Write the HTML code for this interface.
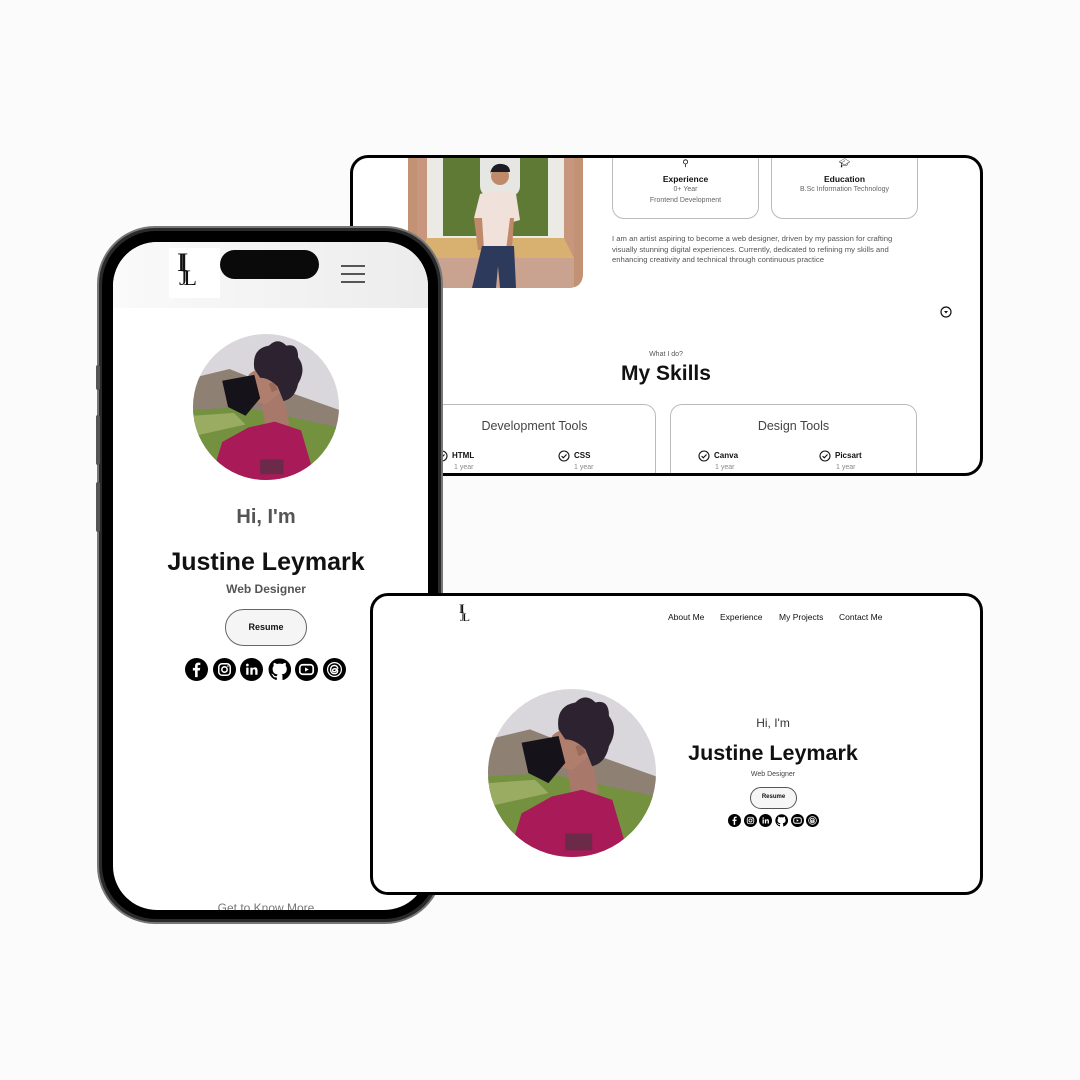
<!DOCTYPE html>
<html><head><meta charset="utf-8">
<style>
*{margin:0;padding:0;box-sizing:border-box}
body{width:1080px;height:1080px;background:#fbfbfb;position:relative;overflow:hidden;font-family:"Liberation Sans",sans-serif;color:#111}
.abs{position:absolute}
.card{position:absolute;background:#fff;border:3px solid #000;border-radius:18px;overflow:hidden}
.t{position:absolute;white-space:nowrap}
.c{text-align:center}
</style></head><body>
<svg width="0" height="0" style="position:absolute">
<defs>
<clipPath id="cc2"><circle cx="50" cy="50" r="50"/></clipPath>
<symbol id="pf" viewBox="0 0 100 100">
<g clip-path="url(#cc2)">
<rect width="100" height="100" fill="#d9d7db"/>
<path d="M0 30 L25 24 L55 36 L100 52 L100 72 L0 72Z" fill="#8f8074"/>
<path d="M0 52 L35 50 L100 64 L100 100 L0 100Z" fill="#74913f"/>
<path d="M0 56 L28 54 L36 62 L0 70Z" fill="#9aab62"/>
<path d="M46 40 L62 42 L66 62 L50 66Z" fill="#a8796a"/>
<path d="M38 28 Q44 22 54 24 L60 40 L50 48 L40 46Z" fill="#b07e6c"/>
<path d="M12 100 L20 74 L38 64 L56 60 L74 66 L84 100Z" fill="#a81a58"/>
<path d="M42 24 Q40 10 52 8 Q58 2 64 8 Q72 6 72 16 Q78 24 72 34 Q70 44 62 46 L58 36 Q52 30 46 30Z" fill="#2c2230"/>
<path d="M20 32 L42 28 L46 44 L36 56 L24 50 Z" fill="#16121a"/>
<path d="M52 34 Q56 32 58 38 L54 40Z" fill="#9a6a5a"/>
<rect x="46" y="86" width="16" height="10" fill="#6a2a48"/>
</g>
</symbol>
<symbol id="fb" viewBox="0 0 24 24"><circle cx="12" cy="12" r="12" fill="#000"/><path d="M13.2 20v-7h2.3l.4-2.7h-2.7V8.6c0-.8.3-1.3 1.4-1.3H16V4.9c-.3 0-1.1-.1-2.1-.1-2.1 0-3.4 1.2-3.4 3.5v2h-2.3V13h2.3v7z" fill="#fff"/></symbol>
<symbol id="ig" viewBox="0 0 24 24"><circle cx="12" cy="12" r="12" fill="#000"/><rect x="6" y="6" width="12" height="12" rx="3.5" fill="none" stroke="#fff" stroke-width="1.6"/><circle cx="12" cy="12" r="2.8" fill="none" stroke="#fff" stroke-width="1.6"/><circle cx="15.6" cy="8.4" r=".8" fill="#fff"/></symbol>
<symbol id="li" viewBox="0 0 24 24"><circle cx="12" cy="12" r="12" fill="#000"/><rect x="6.5" y="10" width="2.4" height="7.5" fill="#fff"/><circle cx="7.7" cy="7.3" r="1.4" fill="#fff"/><path d="M10.8 10h2.3v1.1c.4-.7 1.3-1.3 2.5-1.3 2.2 0 2.7 1.4 2.7 3.3v4.4h-2.4v-3.9c0-.9-.1-1.900-1.2-1.9s-1.5.8-1.5 1.8v4h-2.4z" fill="#fff"/></symbol>
<symbol id="gh" viewBox="0 0 24 24"><path d="M12 .5a11.5 11.5 0 0 0-3.6 22.4c.6.1.8-.3.8-.6v-2.1c-3.2.7-3.900-1.4-3.900-1.4-.5-1.3-1.3-1.7-1.3-1.7-1-.7.1-.7.1-.7 1.2.1 1.8 1.2 1.8 1.2 1 1.8 2.8 1.3 3.5 1 .1-.8.4-1.3.7-1.6-2.6-.3-5.3-1.3-5.3-5.7 0-1.3.5-2.3 1.2-3.1-.1-.3-.5-1.5.1-3.1 0 0 1-.3 3.2 1.2a11 11 0 0 1 5.8 0c2.2-1.5 3.2-1.2 3.2-1.2.6 1.6.2 2.8.1 3.1.7.8 1.2 1.8 1.2 3.1 0 4.4-2.7 5.4-5.3 5.7.4.4.8 1.1.8 2.2v3.2c0 .3.2.7.8.6A11.5 11.5 0 0 0 12 .5z" fill="#000"/></symbol>
<symbol id="yt" viewBox="0 0 24 24"><circle cx="12" cy="12" r="12" fill="#000"/><rect x="5" y="7" width="14" height="10" rx="3" fill="none" stroke="#fff" stroke-width="1.8"/><path d="M10.5 9.8v4.4l3.8-2.2z" fill="#fff"/></symbol>
<symbol id="th" viewBox="0 0 24 24"><circle cx="12" cy="12" r="12" fill="#000"/><path d="M15.5 11.3c-.3-2.3-1.8-3.5-3.8-3.5-2.3 0-3.8 1.7-3.8 4.3 0 2.7 1.6 4.3 4 4.3 2 0 3.4-1.2 3.4-2.8 0-1.6-1.4-2.4-3-2.4-1.3 0-2.3.7-2.3 1.7s.8 1.5 1.8 1.5c1.5 0 2.4-1.2 2.4-3.4" fill="none" stroke="#fff" stroke-width="1.5"/><circle cx="12" cy="12" r="7.2" fill="none" stroke="#fff" stroke-width="1.3"/></symbol>
<symbol id="ck" viewBox="0 0 12 12"><circle cx="6" cy="6" r="5" fill="none" stroke="#111" stroke-width="1.1"/><path d="M3.6 6.1l1.7 1.7 3.2-3.3" fill="none" stroke="#111" stroke-width="1.1"/></symbol>
</defs></svg>

<!-- Top card -->
<div class="card" style="left:350px;top:155px;width:633px;height:321px;">
  <svg class="abs" style="left:55px;top:0" width="175" height="130" viewBox="0 0 175 130">
    <defs><clipPath id="rp"><path d="M0 0H175V115Q175 130 160 130H0Z"/></clipPath></defs>
    <g clip-path="url(#rp)">
    <rect width="175" height="130" fill="#c8967c"/>
    <rect x="19" y="0" width="137" height="80" fill="#eceae4"/>
    <rect x="35" y="0" width="105" height="78" fill="#5f7a34"/>
    <path d="M72 0 H112 V28 Q112 40 92 40 Q72 40 72 28Z" fill="#e6e6e2"/>
    <path d="M19 80 H156 L166 100 H9Z" fill="#d8b070"/>
    <rect x="9" y="100" width="157" height="30" fill="#c9a290"/>
    <rect x="0" y="0" width="9" height="130" fill="#c39275"/>
    <rect x="166" y="0" width="9" height="130" fill="#c39275"/>
    <path d="M72 36 Q90 30 108 36 L112 62 L105 64 L104 95 L74 95 L72 62 L66 60Z" fill="#f0e2da"/>
    <circle cx="92" cy="18" r="9" fill="#c08a6a"/>
    <path d="M82 16 Q84 5 94 6 Q102 7 102 14 L82 14Z" fill="#1c1c24"/>
    <path d="M66 60 L70 92 L76 92 L74 60Z" fill="#c08a6a"/>
    <path d="M106 60 L104 92 L98 92 L102 60Z" fill="#c08a6a"/>
    <path d="M74 88 L106 88 L108 130 L92 130 L90 108 L88 130 L64 130Z" fill="#2e3a5c"/>
    </g>
  </svg>
  <div class="abs" style="left:259px;top:-10px;width:147px;height:71px;border:1px solid #bbb;border-radius:12px"></div>
  <div class="abs" style="left:418px;top:-10px;width:147px;height:71px;border:1px solid #bbb;border-radius:12px"></div>
  <div class="t c" style="left:259px;top:0;width:147px;font-size:9px;line-height:10px">⚲</div>
  <div class="t c" style="left:259px;top:16px;width:147px;font-size:8.5px;font-weight:bold">Experience</div>
  <div class="t c" style="left:259px;top:28px;width:147px;font-size:7px;color:#666">0+ Year</div>
  <div class="t c" style="left:259px;top:39px;width:147px;font-size:7px;color:#666">Frontend Development</div>
  <div class="t c" style="left:418px;top:0;width:147px;font-size:9px;line-height:10px">🎓︎</div>
  <div class="t c" style="left:418px;top:16px;width:147px;font-size:8.5px;font-weight:bold">Education</div>
  <div class="t c" style="left:418px;top:28px;width:147px;font-size:7px;color:#666">B.Sc Information Technology</div>
  <div class="t" style="left:259px;top:76px;font-size:7.7px;line-height:10.6px;color:#555">I am an artist aspiring to become a web designer, driven by my passion for crafting<br>visually stunning digital experiences. Currently, dedicated to refining my skills and<br>enhancing creativity and technical through continuous practice</div>
  <svg class="abs" style="left:587px;top:148px" width="12" height="12" viewBox="0 0 12 12"><circle cx="6" cy="6" r="5" fill="none" stroke="#111" stroke-width="1.2"/><path d="M4 5h4l-2 2.5z" fill="#111"/></svg>
  <div class="t c" style="left:213px;top:193px;width:200px;font-size:7px;color:#555">What I do?</div>
  <div class="t c" style="left:163px;top:204px;width:300px;font-size:21px;font-weight:bold">My Skills</div>
  <div class="abs" style="left:60px;top:246px;width:243px;height:90px;border:1px solid #bbb;border-radius:12px"></div>
  <div class="abs" style="left:317px;top:246px;width:247px;height:90px;border:1px solid #bbb;border-radius:12px"></div>
  <div class="t c" style="left:60px;top:261px;width:243px;font-size:12.5px;color:#444">Development Tools</div>
  <div class="t c" style="left:317px;top:261px;width:247px;font-size:12.5px;color:#444">Design Tools</div>
  <svg class="abs" style="left:83px;top:292px" width="12" height="12"><use href="#ck"/></svg>
  <div class="t" style="left:99px;top:293px;font-size:8px;font-weight:bold">HTML</div>
  <div class="t" style="left:101px;top:306px;font-size:7px;color:#888">1 year</div>
  <svg class="abs" style="left:205px;top:292px" width="12" height="12"><use href="#ck"/></svg>
  <div class="t" style="left:221px;top:293px;font-size:8px;font-weight:bold">CSS</div>
  <div class="t" style="left:221px;top:306px;font-size:7px;color:#888">1 year</div>
  <svg class="abs" style="left:345px;top:292px" width="12" height="12"><use href="#ck"/></svg>
  <div class="t" style="left:361px;top:293px;font-size:8px;font-weight:bold">Canva</div>
  <div class="t" style="left:362px;top:306px;font-size:7px;color:#888">1 year</div>
  <svg class="abs" style="left:466px;top:292px" width="12" height="12"><use href="#ck"/></svg>
  <div class="t" style="left:482px;top:293px;font-size:8px;font-weight:bold">Picsart</div>
  <div class="t" style="left:483px;top:306px;font-size:7px;color:#888">1 year</div>
</div>

<!-- Phone -->
<div class="abs" style="left:97px;top:226px;width:346px;height:698px;border-radius:58px;background:#2a2a2a;border:2px solid #777"></div>
<div class="abs" style="left:96px;top:365px;width:4px;height:25px;background:#555;border-radius:2px"></div>
<div class="abs" style="left:96px;top:415px;width:4px;height:50px;background:#555;border-radius:2px"></div>
<div class="abs" style="left:96px;top:482px;width:4px;height:50px;background:#555;border-radius:2px"></div>
<div class="abs" style="left:102px;top:231px;width:336px;height:688px;border-radius:54px;background:#000"></div>
<div class="abs" style="left:113px;top:242px;width:315px;height:668px;border-radius:44px;background:#fff;overflow:hidden">
  <div class="abs" style="left:0;top:0;width:315px;height:66px;background:linear-gradient(90deg,#fafafa,#ececec)"></div>
  <div class="abs" style="left:56px;top:6px;width:51px;height:50px;background:#fff"></div>
  <div class="t" style="left:64px;top:8px;font-family:'Liberation Serif',serif;font-size:26px;line-height:26px;letter-spacing:-6px">II</div>
  <div class="t" style="left:66px;top:23px;font-family:'Liberation Serif',serif;font-size:22px;line-height:26px;letter-spacing:-4px">JL</div>
  <div class="abs" style="left:228px;top:23px;width:24px;height:2px;background:#555"></div>
  <div class="abs" style="left:228px;top:31px;width:24px;height:2px;background:#555"></div>
  <div class="abs" style="left:228px;top:39px;width:24px;height:2px;background:#555"></div>
  <svg class="abs" style="left:80px;top:92px" width="146" height="146"><use href="#pf"/></svg>
  <div class="t c" style="left:0;top:264px;width:306px;font-size:20px;color:#555;font-weight:bold">Hi, I'm</div>
  <div class="t c" style="left:0;top:306px;width:306px;font-size:25px;font-weight:bold">Justine Leymark</div>
  <div class="t c" style="left:0;top:340px;width:306px;font-size:12px;color:#555;font-weight:bold">Web Designer</div>
  <div class="abs" style="left:112px;top:367px;width:82px;height:37px;border:1.5px solid #666;border-radius:19px;background:#f5f5f5"></div>
  <div class="t c" style="left:112px;top:380px;width:82px;font-size:9px;font-weight:bold">Resume</div>
  <svg class="abs" style="left:72px;top:416px" width="23" height="23"><use href="#fb"/></svg>
  <svg class="abs" style="left:100px;top:416px" width="23" height="23"><use href="#ig"/></svg>
  <svg class="abs" style="left:127px;top:416px" width="23" height="23"><use href="#li"/></svg>
  <svg class="abs" style="left:155px;top:416px" width="23" height="23"><use href="#gh"/></svg>
  <svg class="abs" style="left:182px;top:416px" width="23" height="23"><use href="#yt"/></svg>
  <svg class="abs" style="left:210px;top:416px" width="23" height="23"><use href="#th"/></svg>
  <div class="t c" style="left:0;top:659px;width:306px;font-size:12px;color:#777">Get to Know More</div>
</div>
<div class="abs" style="left:220px;top:250px;width:99px;height:29px;border-radius:15px;background:#0a0a0a"></div>

<!-- Bottom card -->
<div class="card" style="left:370px;top:593px;width:613px;height:302px;">
  <div class="t" style="left:86px;top:6px;font-family:'Liberation Serif',serif;font-size:13px;line-height:13px;letter-spacing:-3px">II</div>
  <div class="t" style="left:87px;top:14px;font-family:'Liberation Serif',serif;font-size:12px;line-height:14px;letter-spacing:-2px">JL</div>
  <div class="t" style="left:295px;top:16px;font-size:8.5px">About Me</div>
  <div class="t" style="left:347px;top:16px;font-size:8.5px">Experience</div>
  <div class="t" style="left:406px;top:16px;font-size:8.5px">My Projects</div>
  <div class="t" style="left:466px;top:16px;font-size:8.5px">Contact Me</div>
  <svg class="abs" style="left:115px;top:93px" width="168" height="168"><use href="#pf"/></svg>
  <div class="t c" style="left:300px;top:120px;width:200px;font-size:12px;color:#333">Hi, I'm</div>
  <div class="t c" style="left:300px;top:145px;width:200px;font-size:21.5px;font-weight:bold">Justine Leymark</div>
  <div class="t c" style="left:300px;top:175px;width:200px;font-size:7px;color:#444">Web Designer</div>
  <div class="abs" style="left:377px;top:191px;width:47px;height:22px;border:1px solid #555;border-radius:11px;background:#f6f6f6"></div>
  <div class="t c" style="left:377px;top:198px;width:47px;font-size:6px;font-weight:bold">Resume</div>
  <svg class="abs" style="left:355px;top:218px" width="13" height="13"><use href="#fb"/></svg>
  <svg class="abs" style="left:371px;top:218px" width="13" height="13"><use href="#ig"/></svg>
  <svg class="abs" style="left:386px;top:218px" width="13" height="13"><use href="#li"/></svg>
  <svg class="abs" style="left:402px;top:218px" width="13" height="13"><use href="#gh"/></svg>
  <svg class="abs" style="left:418px;top:218px" width="13" height="13"><use href="#yt"/></svg>
  <svg class="abs" style="left:433px;top:218px" width="13" height="13"><use href="#th"/></svg>
</div>
</body></html>
